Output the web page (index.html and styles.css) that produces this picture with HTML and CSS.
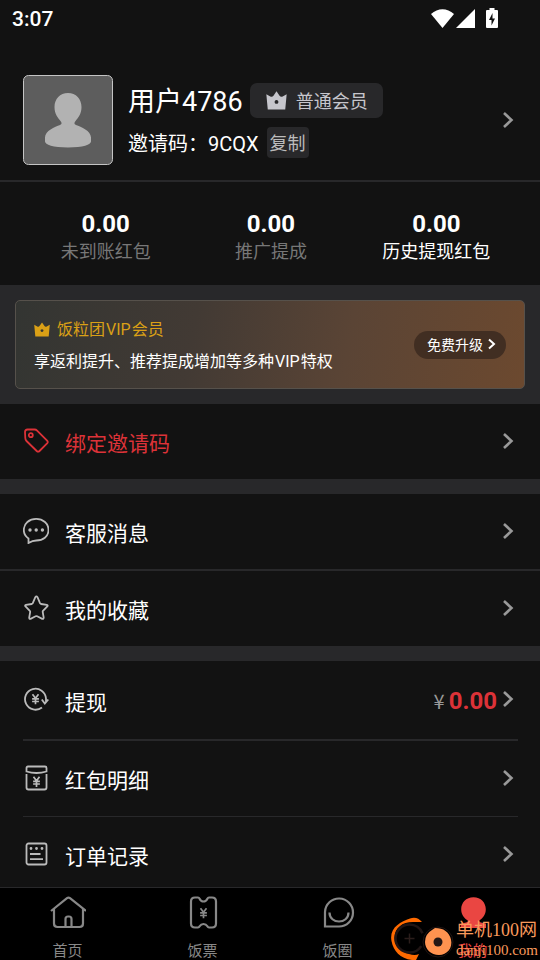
FILE: index.html
```html
<!DOCTYPE html>
<html lang="zh-CN">
<head>
<meta charset="utf-8">
<meta name="viewport" content="width=device-width, initial-scale=1">
<title>我的</title>
<link rel="stylesheet" href="styles.css">
</head>
<body>
<svg class="defs" aria-hidden="true">
  <symbol id="chevron" viewBox="0 0 12 18"><path d="M2 2l7.500 7L2 16" fill="none" stroke="currentColor" stroke-width="2.600"/></symbol>
  <symbol id="crown" viewBox="0 0 22 20"><path fill-rule="evenodd" d="M.3 3.500L4.500 5.800Q6.500 6.800 7.800 5L11 .3 14.200 5q1.300 1.800 3.300.8l4.200-2.300L20.200 19.500H1.800zM11 9.500a2 2 0 1 0 .01 0z" fill="currentColor"/></symbol>
  <symbol id="yen" viewBox="0 0 8 11"><path d="M1 .8l3 4 3-4M4 4.800V11M.6 5.300h6.800M.6 8h6.800" fill="none" stroke="currentColor" stroke-width="1.700"/></symbol>
</svg>

<header class="status">
  <span class="time">3:07</span>
  <svg class="status-icons" viewBox="0 0 68 22" fill="#fff" aria-hidden="true">
    <path d="M0 6C7-.3 16-.3 23 6L11.500 20z"/>
    <path d="M44 1v19H25z"/>
    <path fill-rule="evenodd" d="M58.500 0h5v2H66q1 0 1 1v16q0 1-1 1H56q-1 0-1-1V3q0-1 1-1h2.500zM61.500 5L58 12h2.500v5.500L64 10.500h-2.500z"/>
  </svg>
</header>

<main class="page">
  <section class="profile">
    <svg class="avatar" viewBox="0 0 90 90" role="img" aria-label="头像">
      <rect x=".5" y=".5" width="89" height="89" rx="5" fill="#5d5d5d" stroke="#c4c4c4"/>
      <path d="M45 18c8 0 13.500 6 13.500 14 0 7-3.500 11-6 14-1.500 2-1.500 3 .5 4 5 1.500 15 6 15 12.500v4c0 3-8 6-23 6s-23-3-23-6v-4C22 56 32 51.500 37 50c2-1 2-2 .5-4-2.500-3-6-7-6-14 0-8 5.500-14 13.500-14z" fill="#b2b2b2"/>
    </svg>
    <div class="identity">
      <div class="name-line">
        <h1 class="name">用户4786</h1>
        <span class="badge"><svg class="badge-crown"><use href="#crown"/></svg>普通会员</span>
      </div>
      <div class="code-line">
        <span class="code">邀请码：9CQX</span>
        <button class="copy" type="button">复制</button>
      </div>
    </div>
    <a class="profile-link" href="#" aria-label="个人资料"><svg class="chevron"><use href="#chevron"/></svg></a>
  </section>

  <section class="stats">
    <div class="stat"><strong class="amount">0.00</strong><span>未到账红包</span></div>
    <div class="stat"><strong class="amount">0.00</strong><span>推广提成</span></div>
    <div class="stat stat-active"><strong class="amount">0.00</strong><span>历史提现红包</span></div>
  </section>

  <section class="promo">
    <div class="vip">
      <div class="vip-text">
        <h2 class="vip-title"><svg class="vip-crown"><use href="#crown"/></svg><span>饭粒团<span class="latin">VIP</span>会员</span></h2>
        <p class="vip-desc">享返利提升、推荐提成增加等多种<span class="latin">VIP</span>特权</p>
      </div>
      <button class="upgrade" type="button">免费升级<svg class="upgrade-arrow" viewBox="0 0 8 12"><path d="M1 1.500L6 6 1 10.500" fill="none" stroke="currentColor" stroke-width="2"/></svg></button>
    </div>
  </section>

  <nav class="group">
    <a class="row row-accent" href="#">
      <svg class="icon" viewBox="0 0 26 26"><path d="M4.500 1.500h7q1.500 0 2.600 1.100l10 10q1.300 1.400 0 2.800l-7.600 7.600q-1.400 1.300-2.800 0L3.500 13Q2.300 11.800 2.300 10L2 4q0-2.500 2.500-2.500z"/><circle cx="7.800" cy="7.200" r="2"/></svg>
      <span class="label">绑定邀请码</span>
      <svg class="chevron"><use href="#chevron"/></svg>
    </a>
  </nav>

  <nav class="group">
    <a class="row" href="#">
      <svg class="icon" viewBox="0 0 26 26"><path d="M5.500 25V20.500C2.500 18.500.8 15.500.8 12 .8 5.500 6.300.9 13.200.9S25.500 5.500 25.500 12 20 22.500 13.200 22.500c-3 0-5.200 1-7.700 2.500z"/><path d="M7 12h.01M13.200 12h.01M19.400 12h.01" stroke-width="3.400" stroke-linecap="round"/></svg>
      <span class="label">客服消息</span>
      <svg class="chevron"><use href="#chevron"/></svg>
    </a>
    <a class="row row-ruled" href="#">
      <svg class="icon" viewBox="0 0 26 26"><path d="M12.300 2.200q1.100-1.500 2.200 0l2.500 6q.3.600 1 .8l5.800.8q1.500.5.500 1.700l-4.300 4.300q-.4.500-.3 1.100l1 5.700q0 1.700-1.500 1.200l-5-2.500q-.8-.4-1.600 0l-5 2.500q-1.500.4-1.400-1.200l1-5.700q.1-.6-.4-1.100l-4.300-4.300q-1-1.200.5-1.700L8.800 9q.7-.2 1-.8z"/></svg>
      <span class="label">我的收藏</span>
      <svg class="chevron"><use href="#chevron"/></svg>
    </a>
  </nav>

  <nav class="group">
    <a class="row row-tall" href="#">
      <svg class="icon" viewBox="0 0 26 26"><path d="M19 21.500A10.500 10.500 0 1 1 23 12.500v4M18.800 13.500l3 4 3.500-4"/><use href="#yen" x="8.500" y="7.500" width="8" height="11"/></svg>
      <span class="label">提现</span>
      <span class="balance"><span class="currency">¥</span><strong class="amount">0.00</strong></span>
      <svg class="chevron"><use href="#chevron"/></svg>
    </a>
    <hr class="rule rule-thick">
    <a class="row" href="#">
      <svg class="icon" viewBox="0 0 26 26"><path d="M5 1.500h17q1.500 0 1.500 1.500v3.500Q18.500 8 13.500 8T3.500 6.500V3Q3.500 1.500 5 1.500zM3.500 9v13.500Q3.500 24.500 5.500 24.500h16q2 0 2-2V9"/><use href="#yen" x="9.500" y="11" width="8" height="11"/></svg>
      <span class="label">红包明细</span>
      <svg class="chevron"><use href="#chevron"/></svg>
    </a>
    <hr class="rule">
    <a class="row" href="#">
      <svg class="icon" viewBox="0 0 26 26"><rect x="3.500" y="2.500" width="20" height="21" rx="2"/><path d="M8 7.500h.01M13.500 7.500h.01M19 7.500h.01" stroke-width="2.800" stroke-linecap="round"/><path d="M7 13h10.500M7 18.200h13"/></svg>
      <span class="label">订单记录</span>
      <svg class="chevron"><use href="#chevron"/></svg>
    </a>
  </nav>
</main>

<footer class="tabs-wrap">
  <nav class="tabs">
    <a class="tab" href="#">
      <svg class="tab-icon" viewBox="0 0 36 36"><path d="M1 17L17 4.200q1.500-1.200 3 0L36 17M4 15v14.500Q4 33 7.500 33h22q3.500 0 3.500-3.500V15M15.500 32.500V25q0-2.500 2.500-2.500h1q2.500 0 2.500 2.500v7.500"/></svg>
      <span>首页</span>
    </a>
    <a class="tab" href="#">
      <svg class="tab-icon" viewBox="0 0 36 36"><path d="M10 3.500h3q1 0 1.600 1.200Q16 7.500 18.500 7.500t3.900-2.800Q23 3.500 24 3.500h3q4 0 4 4v22q0 4-4 4h-3q-1 0-1.600-1.200-1.400-2.300-3.900-2.300t-3.900 2.300Q14 33.500 13 33.500h-3q-4 0-4-4v-22q0-4 4-4z"/><use href="#yen" x="14.500" y="13.500" width="8" height="11"/></svg>
      <span>饭票</span>
    </a>
    <a class="tab" href="#">
      <svg class="tab-icon" viewBox="0 0 36 36"><path d="M5 32.500V18A14 14 0 1 1 19 32.500zM9.500 18.500c0 12 19 12 19 0"/></svg>
      <span>饭圈</span>
    </a>
    <a class="tab tab-current" href="#" aria-current="page">
      <svg class="tab-icon" viewBox="0 0 36 36"><path d="M18.500 3.200c7.500 0 12.300 5.500 12.300 12 0 5.500-3 9-6.300 11-1 1.500 0 2.300 6.500 3.300V34h-25v-4.500c6.500-1 7.500-1.800 6.500-3.300-3.300-2-6.300-5.500-6.300-11 0-6.500 4.800-12 12.300-12z"/></svg>
      <span>我的</span>
    </a>
  </nav>
  <div class="watermark">
    <svg class="mark" viewBox="0 0 66 46" aria-hidden="true">
      <path d="M32 8Q27 2 20 4.500C10 8-1 14 1.500 27 3.500 37 10 44.500 22 46h4l3-6q-4 2-10 0C9 37 4 31 4.500 23 5 14 12 8 23 8z" fill="#ff6a00"/>
      <circle cx="19.500" cy="24.500" r="14" fill="none" stroke="#201514" stroke-width="2.500" stroke-dasharray="74 14" stroke-dashoffset="-8"/>
      <path d="M14.500 24.500h10M19.500 19.500v10" stroke="#2a1d1b" stroke-width="1.500"/>
      <circle cx="48" cy="28" r="15" fill="none" stroke="#201514"/>
      <path d="M45 14Q58 14 61 25.500C63 34 57 41 49 41S35 35 35 28q0-8 7-12z" fill="#ff9350"/>
      <circle cx="48" cy="28" r="4.500" fill="#241715"/>
    </svg>
    <span class="mark-text"><span class="mark-name">单机100网</span><span class="mark-site">danji100.com</span></span>
  </div>
</footer>
</body>
</html>
```
FILE: styles.css
```css
* {
  box-sizing: border-box;
}

body {
  display: flex;
  flex-direction: column;
  height: 100vh;
  margin: 0;
  background: #121212;
  color: #fff;
  font-family: Roboto, "Noto Sans CJK SC", sans-serif;
  font-size: 21px;
}

a {
  color: inherit;
  text-decoration: none;
}

button {
  border: 0;
  font-family: inherit;
}

h1,
h2,
p {
  margin: 0;
  font-weight: 400;
}

svg {
  display: block;
  flex: none;
}

.defs {
  position: absolute;
  width: 0;
  height: 0;
}

.status {
  display: flex;
  flex: none;
  align-items: center;
  justify-content: space-between;
  height: 37px;
  padding: 0 41px 0 12px;
}

.time {
  font-weight: 500;
}

.status-icons {
  width: 68px;
  height: 22px;
}

.page {
  flex: 1;
  min-height: 0;
  overflow-y: auto;
  scrollbar-width: none;
  background: #28282a;
}

.profile {
  display: flex;
  align-items: center;
  gap: 15px;
  padding: 38px 26px 15px 23px;
  border-bottom: 2px solid #28282a;
  background: #121212;
}

.avatar {
  width: 90px;
  height: 90px;
}

.identity {
  display: flex;
  flex: 1;
  flex-direction: column;
  gap: 9px;
}

.name-line,
.code-line {
  display: flex;
  align-items: center;
  gap: 8px;
}

.name-line {
  gap: 7px;
}

.name {
  padding-top: 4px;
  font-size: 27px;
  line-height: 31px;
}

.badge {
  display: flex;
  align-items: center;
  gap: 9px;
  height: 35px;
  padding: 0 15px 0 16px;
  border-radius: 7px;
  background: #28282a;
  color: #c6c6cc;
  font-size: 18px;
}

.badge-crown {
  width: 21px;
  height: 19px;
}

.code {
  padding-top: 4px;
  font-size: 20px;
  line-height: 27px;
}

.copy {
  height: 31px;
  padding: 0 3px;
  border-radius: 4px;
  background: #28282a;
  color: #bbb;
  font-size: 18px;
}

.chevron {
  width: 12px;
  height: 18px;
  color: #999;
}

.stats {
  display: grid;
  grid-template-columns: repeat(3, 1fr);
  padding: 28px 21px 20px 23px;
  background: #121212;
}

.stat {
  display: flex;
  flex-direction: column;
  align-items: center;
  color: #777;
  font-size: 18px;
  line-height: 26px;
  white-space: nowrap;
}

.stat-active {
  color: #fff;
}

.amount {
  color: #fff;
  font-size: 24px;
  font-weight: 700;
  line-height: 29px;
}

.promo {
  padding: 15px;
}

.vip {
  display: flex;
  align-items: center;
  justify-content: space-between;
  min-height: 89px;
  padding: 0 18px 0 18px;
  border: 1px solid #56514b;
  border-radius: 5px;
  background: linear-gradient(100deg, #333532, #423a34 35%, #5a4435 65%, #6c492f);
  font-size: 16px;
}

.vip-text {
  display: flex;
  flex-direction: column;
  gap: 8px;
  padding-top: 2px;
  line-height: 24px;
}

.vip-title {
  display: flex;
  align-items: center;
  gap: 7px;
  color: #daa016;
  font-size: 16px;
}

.vip-crown {
  width: 16px;
  height: 15px;
}

.vip-desc {
  white-space: nowrap;
}

.latin {
  margin: 0 1px;
}

.upgrade {
  display: flex;
  align-items: center;
  gap: 5px;
  height: 28px;
  padding: 0 10px 2px 13px;
  border-radius: 14px;
  background: #412e22;
  color: #fff;
  font-size: 14px;
  white-space: nowrap;
}

.upgrade-arrow {
  width: 8px;
  height: 12px;
}

.group {
  margin-bottom: 15px;
  background: #121212;
}

.row {
  display: flex;
  align-items: center;
  gap: 16px;
  height: 75px;
  padding: 0 26px 2px 23px;
}

.row-ruled {
  height: 77px;
  border-top: 2px solid #28282a;
}

.row-tall {
  height: 78px;
}

.row-accent,
.row-accent .icon {
  color: #dc3238;
}

.icon {
  width: 26px;
  height: 26px;
  color: #bbb;
  fill: none;
  stroke: currentColor;
  stroke-width: 1.8;
}

.label {
  flex: 1;
  padding-top: 3px;
}

.balance {
  display: flex;
  align-items: baseline;
  gap: 4px;
  margin-right: -11px;
  padding-top: 4px;
}

.balance .amount {
  color: #dc3238;
}

.currency {
  color: #999;
  font-family: "Noto Sans CJK SC", sans-serif;
  font-size: 20px;
  line-height: 29px;
}

.rule {
  height: 1px;
  margin: 0 22px 0 23px;
  border: 0;
  background: #28282a;
}

.rule-thick {
  height: 2px;
}

.tabs-wrap {
  position: relative;
  flex: none;
  border-top: 1px solid #28282a;
  background: #000;
}

.tabs {
  display: grid;
  grid-template-columns: repeat(4, 1fr);
  height: 72px;
  padding-top: 6px;
}

.tab {
  display: flex;
  flex-direction: column;
  align-items: center;
  gap: 11px;
  color: #888;
  font-size: 15px;
  line-height: 20px;
}

.tab-icon {
  width: 36px;
  height: 36px;
  fill: none;
  stroke: currentColor;
  stroke-width: 2.2;
}

.tab-current {
  color: #ea4642;
}

.tab-current .tab-icon {
  fill: currentColor;
  stroke: none;
}

.watermark {
  position: absolute;
  right: 2px;
  bottom: 0;
  display: flex;
  align-items: flex-end;
}

.mark {
  width: 66px;
  height: 46px;
}

.mark-text {
  display: flex;
  flex-direction: column;
  color: #f99a5c;
  font-family: "Liberation Serif", "Noto Sans CJK SC", serif;
  white-space: nowrap;
}

.mark-name {
  font-size: 18px;
  line-height: 20px;
}

.mark-site {
  font-size: 15px;
  line-height: 20px;
}
```
